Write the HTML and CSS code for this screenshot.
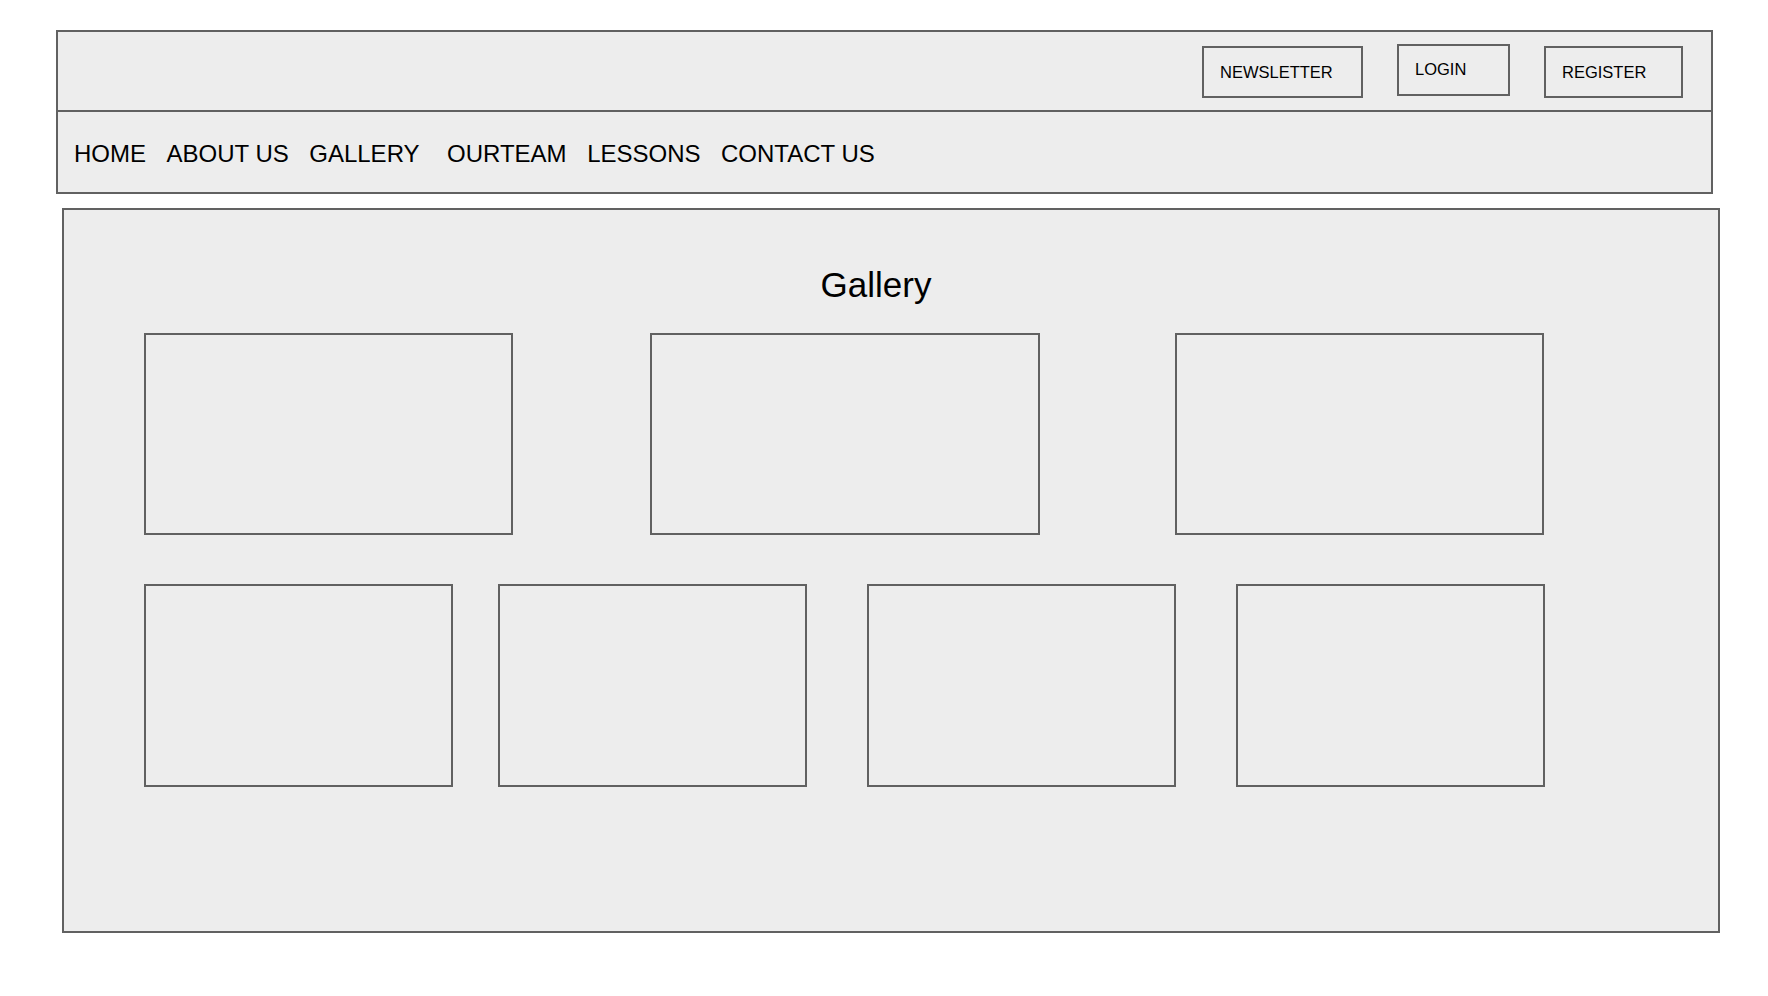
FILE: index.html
```html
<!DOCTYPE html>
<html lang="en">
<head>
    <meta charset="UTF-8">
    <meta name="viewport" content="width=device-width, initial-scale=1.0">
    <title>Gallery</title>
    <link rel="stylesheet" href="styles.css">
</head>
<body>
    <header class="site-header">
        <div class="top-bar">
            <a class="top-btn btn-newsletter" href="#">NEWSLETTER</a>
            <a class="top-btn btn-login" href="#">LOGIN</a>
            <a class="top-btn btn-register" href="#">REGISTER</a>
        </div>
        <nav class="main-nav">
            <a href="#">HOME</a>
            <a href="#">ABOUT US</a>
            <a href="#" class="nav-gallery">GALLERY</a>
            <a href="#">OURTEAM</a>
            <a href="#">LESSONS</a>
            <a href="#">CONTACT US</a>
        </nav>
    </header>

    <main class="gallery">
        <h1>Gallery</h1>

        <div class="row row-three">
            <div class="tile tile-a"></div>
            <div class="tile tile-b"></div>
            <div class="tile tile-a"></div>
        </div>

        <div class="row row-four">
            <div class="tile tile-s"></div>
            <div class="tile tile-s"></div>
            <div class="tile tile-s"></div>
            <div class="tile tile-s"></div>
        </div>
    </main>
</body>
</html>
```

FILE: styles.css
```css
:root {
    --line-color: #616161;
    --panel-color: #ededed;
    --text-color: #000;
}
body {
    margin: 0;
    font-family: 'Liberation Sans', Arial, sans-serif;
    color: var(--text-color);
    background-color: #fff;
}
a {
    color: var(--text-color);
    text-decoration: none;
}
.site-header {
    margin: 30px 0 0 56px;
    width: 1657px;
    box-sizing: border-box;
    border: 2px solid var(--line-color);
    background-color: var(--panel-color);
}
.top-bar {
    height: 80px;
    box-sizing: border-box;
    border-bottom: 2px solid var(--line-color);
    display: flex;
    justify-content: flex-end;
    align-items: flex-start;
    gap: 34px;
    padding: 14px 28px 0 0;
}
.top-btn {
    display: flex;
    align-items: center;
    box-sizing: border-box;
    height: 52px;
    padding-left: 16px;
    border: 2px solid var(--line-color);
    font-size: 16.5px;
}
.btn-newsletter {
    width: 161px;
}
.btn-login {
    width: 113px;
    margin-top: -2px;
    padding-bottom: 1px;
}
.btn-register {
    width: 139px;
}
.main-nav {
    height: 80px;
    display: flex;
    align-items: center;
    gap: 20.5px;
    padding: 4px 0 0 16px;
    box-sizing: border-box;
    font-size: 24px;
}
.nav-gallery {
    margin-right: 7px;
}
.gallery {
    margin: 14px 0 0 62px;
    width: 1658px;
    height: 725px;
    box-sizing: border-box;
    border: 2px solid var(--line-color);
    background-color: var(--panel-color);
    padding: 55px 0 0 80px;
}
.gallery h1 {
    margin: 0 0 28px;
    padding-right: 110px;
    text-align: center;
    font-size: 35px;
    font-weight: normal;
    line-height: 40px;
}
.row {
    display: flex;
}
.row-three {
    height: 202px;
}
.row-three .tile + .tile {
    margin-left: 137px;
}
.row-three .tile:last-child {
    margin-left: 135px;
}
.row-four {
    margin-top: 49px;
    height: 203px;
}
.row-four .tile + .tile {
    margin-left: 45px;
}
.row-four .tile:nth-child(n+3) {
    margin-left: 60px;
}
.tile {
    box-sizing: border-box;
    border: 2px solid var(--line-color);
    background-color: var(--panel-color);
}
.tile-a {
    width: 369px;
}
.tile-b {
    width: 390px;
}
.tile-s {
    width: 309px;
}
```
